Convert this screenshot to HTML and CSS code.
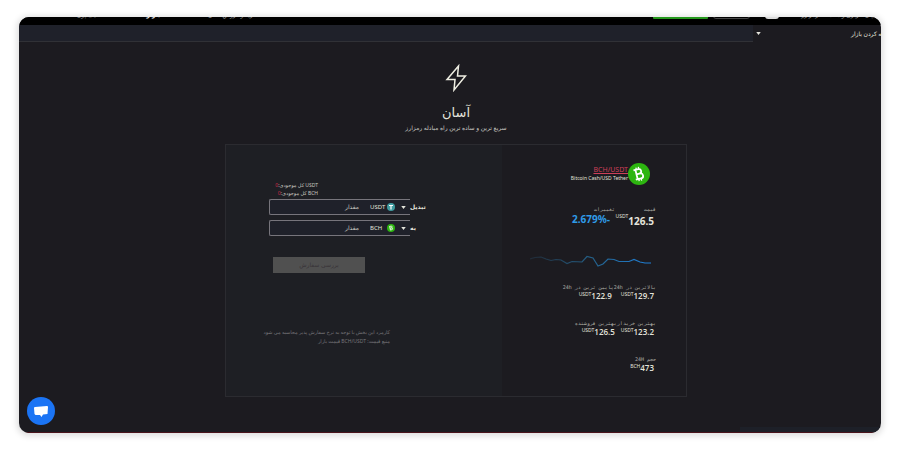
FILE: index.html
```html
<!DOCTYPE html>
<html lang="fa" dir="rtl">
<head>
    <meta charset="UTF-8">
    <meta name="viewport" content="width=device-width, initial-scale=1.0">
    <title>آسان</title>
    <link rel="stylesheet" href="styles.css">
</head>
<body>
    <div class="screen">
        <header class="header">
            <nav class="nav">
                <a href="#" class="brand">پنل کاربری و معاملات رمزارز</a>
                <span class="badge"></span>
                <button class="header-button">خروج</button>
                <button class="header-button green" aria-label="ثبت نام"></button>
            </nav>
            <nav class="links">
                <a href="#">خرید و فروش آسان</a>
                <a href="#" class="active">بازار</a>
                <a href="#">کیف پول</a>
            </nav>
        </header>

        <div class="market-bar">
            <div class="market-add">
                <select class="market-select" aria-label="بازار">
                    <option>اضافه کردن بازار</option>
                </select>
                <svg class="arrow" viewBox="0 0 6 4"><path d="M0 0h6L3 4z"/></svg>
            </div>
            <div class="market-list"></div>
        </div>

        <main class="main">
            <svg class="bolt" viewBox="0 0 22 28"><path d="M13.500 2 2 15.500H10L9 26 20.500 12H12.500z"/></svg>
            <h1 class="title">آسان</h1>
            <p class="subtitle">سریع ترین و ساده ترین راه مبادله رمزارز</p>

            <div class="panel">
                <section class="info">
                    <div class="pair">
                        <svg class="pair-icon" viewBox="0 0 22 22">
                            <circle cx="11" cy="11" r="11" fill="#2db510"/>
                            <g transform="rotate(-14 11 11)" fill="none" stroke="#fff" stroke-width="1.800">
                                <path d="M8.500 6.200V15.800M6.500 6.200H11.500a2.200 2.200 0 0 1 0 4.600H8.500M11.500 10.800h.6a2.400 2.400 0 0 1 0 5H6.500"/>
                                <path d="M9.500 4v2M12 4v2M9.500 16v2M12 16v2" stroke-width="1.300"/>
                            </g>
                        </svg>
                        <div class="pair-text">
                            <a href="#" class="pair-name">BCH/USDT</a>
                            <span class="pair-full">Bitcoin Cash/USD Tether</span>
                        </div>
                    </div>

                    <div class="stats price">
                        <div class="stat">
                            <span class="stat-label">قیمت</span>
                            <span class="stat-value"><b>126.5</b><small>USDT</small></span>
                        </div>
                        <div class="stat">
                            <span class="stat-label">تغییرات</span>
                            <span class="change">-2.679%</span>
                        </div>
                    </div>

                    <svg class="chart" viewBox="0 0 121 14">
                        <defs>
                            <linearGradient id="line" gradientUnits="userSpaceOnUse" x1="0" y1="0" x2="121" y2="0">
                                <stop offset="0" stop-color="#202a36"/>
                                <stop offset="0.5" stop-color="#245f86"/>
                                <stop offset="1" stop-color="#1f80d8"/>
                            </linearGradient>
                        </defs>
                        <path d="M0 4 5 2.500 11 2 16 4 21 5.500 26 4.500 31 5 37 8.500 42 6.500 52 7 57 1.500 63 3 68 11 73 9 78 4 84 4.500 89 6.500 99 6.500 104 4.500 110 7 115 8 121 8"/>
                    </svg>

                    <div class="stats">
                        <div class="stat">
                            <span class="stat-label">بالاترین در 24h</span>
                            <span class="stat-value"><b>129.7</b><small>USDT</small></span>
                        </div>
                        <div class="stat">
                            <span class="stat-label">پایین ترین در 24h</span>
                            <span class="stat-value"><b>122.9</b><small>USDT</small></span>
                        </div>
                    </div>
                    <div class="stats">
                        <div class="stat">
                            <span class="stat-label">بهترین خریدار</span>
                            <span class="stat-value"><b>123.2</b><small>USDT</small></span>
                        </div>
                        <div class="stat">
                            <span class="stat-label">بهترین فروشنده</span>
                            <span class="stat-value"><b>126.5</b><small>USDT</small></span>
                        </div>
                    </div>
                    <div class="stats">
                        <div class="stat">
                            <span class="stat-label">حجم 24H</span>
                            <span class="stat-value"><b>473</b><small>BCH</small></span>
                        </div>
                    </div>
                </section>

                <form class="exchange">
                    <div class="balances">
                        <div>USDT کل موجودی:<span class="red">0</span></div>
                        <div>BCH کل موجودی:<span class="red">0</span></div>
                    </div>

                    <div class="row">
                        <label class="row-label" for="fromAmount">تبدیل</label>
                        <div class="field">
                            <svg class="arrow" viewBox="0 0 6 4"><path d="M0 0h6L3 4z"/></svg>
                            <svg class="coin" viewBox="0 0 8 8">
                                <circle cx="4" cy="4" r="4" fill="#3f9ba0"/>
                                <path d="M2 2.500h4M4 2.500v4" stroke="#fff" stroke-width="1.200"/>
                            </svg>
                            <select class="coin-select" dir="ltr" aria-label="تبدیل"><option>USDT</option></select>
                            <input type="text" id="fromAmount" class="amount" placeholder="مقدار">
                        </div>
                    </div>
                    <div class="row">
                        <label class="row-label" for="toAmount">به</label>
                        <div class="field">
                            <svg class="arrow" viewBox="0 0 6 4"><path d="M0 0h6L3 4z"/></svg>
                            <svg class="coin" viewBox="0 0 8 8">
                                <circle cx="4" cy="4" r="4" fill="#2db510"/>
                                <path d="M3 2v4M3 2.200h1.500a.9.9 0 0 1 0 1.800H3M4.500 4a.9.9 0 0 1 0 1.800H3" stroke="#fff" stroke-width=".8" fill="none" transform="rotate(-14 4 4)"/>
                            </svg>
                            <select class="coin-select" dir="ltr" aria-label="به"><option>BCH</option></select>
                            <input type="text" id="toAmount" class="amount" placeholder="مقدار">
                        </div>
                    </div>

                    <button type="button" class="submit" disabled>بررسی سفارش</button>

                    <div class="notes">
                        <p>کارمزد این بخش با توجه به نرخ سفارش پذیر محاسبه می شود</p>
                        <p>منبع قیمت: BCH/USDT قیمت بازار</p>
                    </div>
                </form>
            </div>
        </main>

        <footer class="footer"><div class="footer-tab"></div></footer>

        <button class="chat" aria-label="گفتگو">
            <svg viewBox="0 0 14 11"><path d="M1 1 13 0Q14 0 14 1L13.500 8 9 8.500 7.500 11 6 9 1.500 9 .5 8 0 2Q0 1 1 1z"/></svg>
        </button>
    </div>
</body>
</html>
```
FILE: styles.css
```css
* {
    box-sizing: border-box;
}
body {
    margin: 0;
    padding: 17px 19px;
    background-color: #fff;
    color: #e4e4dc;
    font-family: "Noto Sans", "Open Sans", "DejaVu Sans", sans-serif;
    font-size: 6px;
    line-height: 8px;
}
h1, p {
    margin: 0;
}
a {
    color: inherit;
    text-decoration: none;
}
button, input, select {
    font: inherit;
    color: inherit;
    border: none;
    padding: 0;
    margin: 0;
    background: none;
    appearance: none;
}
.screen {
    position: relative;
    display: flex;
    flex-direction: column;
    min-height: calc(100vh - 34px);
    border-radius: 10px;
    overflow: hidden;
    background-color: #1c1b20;
    box-shadow: 0 1px 6px 2px #dedede;
}

/* header */
.header {
    display: flex;
    justify-content: space-between;
    align-items: flex-end;
    height: 8px;
    padding: 0 8px 6px 58px;
    background-color: #000;
    overflow: hidden;
    color: #aaa;
}
.nav, .links {
    display: flex;
    align-items: flex-end;
    white-space: nowrap;
}
.nav {
    gap: 15px;
}
.links {
    gap: 48px;
}
.links .active {
    color: #fff;
    font-weight: bold;
}
.brand {
    width: 79px;
}
.badge {
    width: 14px;
    height: 10px;
    border-radius: 3px;
    background-color: #ddd;
}
.header-button {
    width: 37px;
    height: 12px;
    border: 1px solid #444;
    border-radius: 3px;
}
.header-button.green {
    width: 55px;
    margin-right: -10px;
    border: none;
    border-radius: 1px;
    background-color: #25981c;
}

/* market bar */
.market-bar {
    display: flex;
    height: 17px;
}
.market-add {
    display: flex;
    align-items: center;
    justify-content: space-between;
    width: 128px;
    padding-left: 3px;
    overflow: hidden;
}
.market-select {
    width: 80px;
    margin-right: -12px;
}
.market-list {
    flex: 1;
    background-color: #1f212a;
    border-bottom: 1px solid #303136;
}
.arrow {
    width: 5px;
    height: 3px;
    fill: #e4e4dc;
}

/* main */
.main {
    flex: 1;
    display: flex;
    flex-direction: column;
    align-items: center;
    padding: 22px 0 30px 12px;
}
.bolt {
    width: 22px;
    height: 28px;
    fill: none;
    stroke: #eeeee2;
    stroke-width: 1.5;
}
.title {
    margin-top: 8px;
    font-size: 13px;
    line-height: 24px;
    font-weight: normal;
}
.subtitle {
    color: #c8c8c0;
}
.panel {
    display: flex;
    width: 54%;
    min-width: 462px;
    margin-top: 12px;
    border: 1px solid #2b2b30;
}

/* pair info */
.info {
    flex: none;
    width: 40%;
    padding: 18px 30px 23px 0;
}
.pair {
    display: flex;
    align-items: center;
    margin-right: 6px;
}
.pair-icon {
    width: 22px;
    height: 22px;
}
.pair-text {
    display: flex;
    flex-direction: column;
    direction: ltr;
    text-align: right;
}
.pair-name {
    color: #cc4058;
    font-size: 7px;
    line-height: 9px;
    text-decoration: underline;
}
.pair-full {
    font-size: 5px;
    line-height: 9px;
}
.stats {
    display: flex;
    margin-bottom: 18px;
}
.stats:last-child {
    margin-bottom: 0;
}
.stats.price {
    margin-top: 20px;
    margin-bottom: 26px;
}
.stat-label {
    display: block;
    color: #b0b0a8;
    font-family: "DejaVu Sans Mono", monospace;
    font-size: 5px;
    white-space: nowrap;
}
.stat-value {
    display: flex;
    align-items: flex-start;
    padding-right: 2px;
    line-height: 10px;
}
.stat-value b {
    font-family: "Open Sans", sans-serif;
    font-size: 8px;
    font-weight: 600;
}
.stat-value small {
    font-size: 5px;
    line-height: 7px;
}
.price .stat {
    min-width: 41px;
}
.price b {
    font-family: "Noto Sans", sans-serif;
    font-size: 10px;
    line-height: 16px;
    font-weight: bold;
}
.change {
    color: #2f9be8;
    font-size: 10px;
    line-height: 13px;
    font-weight: bold;
    padding-right: 5px;
}
.chart {
    display: block;
    width: 121px;
    height: 14px;
    margin: 0 5px 14px 0;
    fill: none;
    stroke: url(#line);
    stroke-width: 1.2;
}

/* exchange form */
.exchange {
    flex: 1;
    min-width: 0;
    padding: 36px 77px 0 43px;
    background-color: #1e1f24;
}
.balances {
    margin: 0 107px 2px 0;
    color: #c8c8c0;
    font-size: 5px;
    white-space: nowrap;
}
.red {
    color: #d02848;
}
.row {
    display: flex;
    align-items: center;
    margin-bottom: 5px;
}
.row-label {
    width: 15px;
    direction: ltr;
    font-weight: bold;
    white-space: nowrap;
}
.field {
    flex: 1;
    display: flex;
    align-items: center;
    height: 16px;
    padding-right: 4px;
    border: 1px solid #77757c;
    border-right: none;
    border-radius: 2px 0 0 2px;
    background-color: #1f212a;
}
.coin {
    width: 8px;
    height: 8px;
    margin-right: 6px;
}
.coin-select {
    width: 17px;
}
.amount {
    flex: 1;
    min-width: 0;
    padding-right: 11px;
}
.amount::placeholder {
    color: #c8c8c0;
    opacity: 1;
}
.submit {
    display: block;
    width: 92px;
    height: 16px;
    margin: 21px 60px 0 0;
    background-color: #505050;
    color: #383438;
}
.notes {
    margin: 55px 35px 0 0;
    color: #77757a;
    font-size: 5px;
    line-height: 9px;
    white-space: nowrap;
}

/* footer */
.footer {
    height: 6px;
    border-bottom: 1px solid #4a141c;
}
.footer-tab {
    width: 141px;
    height: 5px;
    background-color: #1d2028;
}
.chat {
    position: absolute;
    left: 8px;
    bottom: 8px;
    display: flex;
    align-items: center;
    justify-content: center;
    width: 28px;
    height: 28px;
    border-radius: 50%;
    background-color: #1b74f4;
}
.chat svg {
    width: 14px;
    height: 11px;
    fill: #fff;
}
```
